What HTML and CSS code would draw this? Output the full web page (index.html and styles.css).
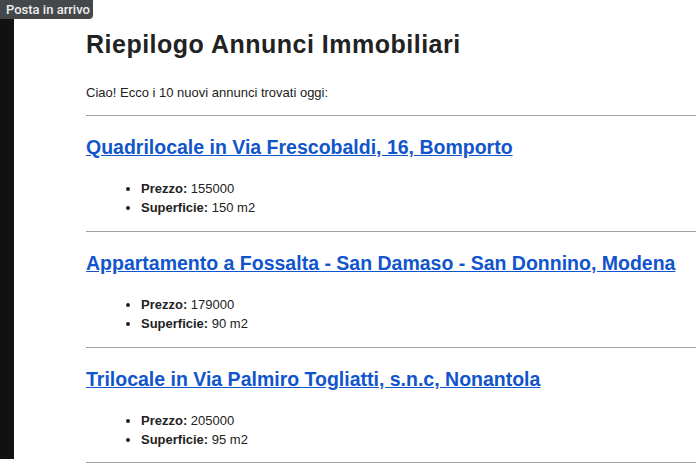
FILE: index.html
```html
<!DOCTYPE html>
<html lang="it">
<head>
<meta charset="utf-8">
<title>Riepilogo Annunci Immobiliari</title>
<link rel="stylesheet" href="styles.css">
</head>
<body>
<div class="frame">
  <div class="strip"></div>
  <main class="mail">
    <h1 class="title">Riepilogo Annunci Immobiliari</h1>
    <p class="intro">Ciao! Ecco i 10 nuovi annunci trovati oggi:</p>
    <section class="item">
      <hr class="sep">
      <h2 class="item-title"><a href="#">Quadrilocale in Via Frescobaldi, 16, Bomporto</a></h2>
      <ul class="facts">
        <li><strong>Prezzo:</strong> 155000</li>
        <li><strong>Superficie:</strong> 150 m2</li>
      </ul>
    </section>
    <section class="item">
      <hr class="sep">
      <h2 class="item-title"><a href="#">Appartamento a Fossalta - San Damaso - San Donnino, Modena</a></h2>
      <ul class="facts">
        <li><strong>Prezzo:</strong> 179000</li>
        <li><strong>Superficie:</strong> 90 m2</li>
      </ul>
    </section>
    <section class="item">
      <hr class="sep">
      <h2 class="item-title"><a href="#">Trilocale in Via Palmiro Togliatti, s.n.c, Nonantola</a></h2>
      <ul class="facts facts-last">
        <li><strong>Prezzo:</strong> 205000</li>
        <li><strong>Superficie:</strong> 95 m2</li>
      </ul>
    </section>
    <section class="item">
      <hr class="sep">
    </section>
  </main>
</div>
<div class="tooltip">Posta in arrivo</div>
</body>
</html>
```
FILE: styles.css
```css
html, body {
  margin: 0;
  padding: 0;
  background: #ffffff;
  overflow: hidden;
}
body {
  font-family: "Liberation Sans", Arial, sans-serif;
  color: #222222;
  width: 696px;
  height: 463px;
}
.frame {
  display: flex;
  height: 463px;
  overflow: hidden;
}
.strip {
  width: 14px;
  height: 459px;
  background: #111111;
  flex: none;
}
.mail {
  flex: 1;
  padding: 30px 0 0 72px;
  min-width: 0;
  overflow: hidden;
}
.title {
  margin: 0;
  font-size: 25px;
  letter-spacing: 0.5px;
  font-weight: bold;
  line-height: 28px;
  color: #222222;
}
.intro {
  margin: 27px 0 15px;
  font-size: 13px;
  line-height: 15px;
}
.sep {
  margin: 0;
  border: 0;
  border-top: 1px solid #a0a0a0;
  height: 0;
}
.item-title {
  margin: 20px 0 20px;
  font-size: 19.5px;
  line-height: 23px;
  font-weight: bold;
  white-space: nowrap;
}
.item-title a {
  color: #1155cc;
  text-decoration: underline;
}
.facts {
  margin: 0 0 14px;
  padding-left: 55px;
  font-size: 13px;
  line-height: 19px;
}
.facts-last {
  margin-bottom: 13px;
}
.tooltip {
  position: absolute;
  left: 0;
  top: 0;
  width: 93px;
  height: 19px;
  box-sizing: border-box;
  padding: 2px 0 0 6px;
  background: #45484b;
  color: #eeeeee;
  font-family: Roboto, "Noto Sans", sans-serif;
  font-weight: 500;
  font-size: 13px;
  line-height: 15px;
  border-radius: 0 0 4px 0;
  white-space: nowrap;
}
```
